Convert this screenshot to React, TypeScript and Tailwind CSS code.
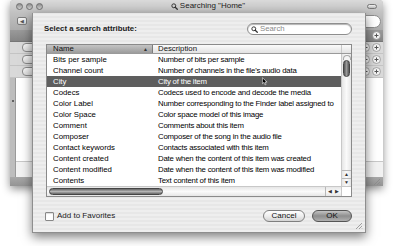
import React from 'react';

const rows: [string, string][] = [
  ["Bits per sample", "Number of bits per sample"],
  ["Channel count", "Number of channels in the file's audio data"],
  ["City", "City of the item"],
  ["Codecs", "Codecs used to encode and decode the media"],
  ["Color Label", "Number corresponding to the Finder label assigned to"],
  ["Color Space", "Color space model of this image"],
  ["Comment", "Comments about this item"],
  ["Composer", "Composer of the song in the audio file"],
  ["Contact keywords", "Contacts associated with this item"],
  ["Content created", "Date when the content of this item was created"],
  ["Content modified", "Date when the content of this item was modified"],
  ["Contents", "Text content of this item"],
];

function Magnifier({ className }: { className?: string }) {
  return (
    <svg viewBox="0 0 10 10" className={className}>
      <circle cx="4" cy="4" r="2.8" fill="none" stroke="#333" strokeWidth="1.4" />
      <path d="M6 6 L9 9" stroke="#333" strokeWidth="1.8" strokeLinecap="round" />
    </svg>
  );
}

function PlusMinus({ sign }: { sign: '+' | '-' }) {
  return (
    <svg viewBox="0 0 10 10" className="w-[9px] h-[9px]">
      <circle cx="5" cy="5" r="4.4" fill="#f4f4f4" stroke="#8a8a8a" strokeWidth="0.8" />
      <path d={sign === '+' ? "M2.8 5 H7.2 M5 2.8 V7.2" : "M2.8 5 H7.2"} stroke="#555" strokeWidth="1.1" />
    </svg>
  );
}

function Grip() {
  return (
    <svg viewBox="0 0 8 8" className="w-[8px] h-[8px]">
      <path d="M7 1 L1 7 M7 4 L4 7 M7 6.5 L6.5 7" stroke="#8c8c8c" strokeWidth="0.8" />
    </svg>
  );
}

function Cursor() {
  return (
    <svg viewBox="0 0 8 11" className="w-[6px] h-[9px]">
      <path d="M0.5 0.5 L0.5 8.5 L2.5 6.7 L4 10 L5.4 9.4 L4 6.2 L6.8 6.2 Z" fill="#000" stroke="#fff" strokeWidth="0.8" strokeLinejoin="round" />
    </svg>
  );
}

export default function App() {
  return (
    <div className="relative w-[396px] h-[246px] bg-white overflow-hidden font-['Liberation_Sans',Arial,sans-serif] text-[7.8px] text-black">
      {/* Background Finder window */}
      <div className="ml-[10px] w-[373px] h-[186px] flex flex-col rounded-t-[4px] overflow-hidden shadow-[0_3px_8px_rgba(0,0,0,0.45)] bg-[#bdbdbd]">
        {/* Title bar */}
        <div className="h-[12px] flex items-center px-[6px] bg-gradient-to-b from-[#dadada] to-[#c2c2c2]">
          <div className="flex gap-[3px]">
            <span className="w-[7px] h-[7px] rounded-full bg-gradient-to-b from-[#8f8f8f] to-[#d0d0d0] border border-[#6f6f6f]" />
            <span className="w-[7px] h-[7px] rounded-full bg-gradient-to-b from-[#8f8f8f] to-[#d0d0d0] border border-[#6f6f6f]" />
            <span className="w-[7px] h-[7px] rounded-full bg-gradient-to-b from-[#8f8f8f] to-[#d0d0d0] border border-[#6f6f6f]" />
          </div>
          <div className="flex-1 flex items-center justify-center gap-[2px] pl-[6px]">
            <Magnifier className="w-[7px] h-[7px]" />
            <span className="text-[8px] text-[#222]">Searching "Home"</span>
          </div>
          <span className="w-[10px] h-[5px] rounded-full border border-[#777] bg-gradient-to-b from-[#f0f0f0] to-[#bbb]" />
        </div>
        {/* Toolbar */}
        <div className="h-[18px] flex items-center pl-[7px] pr-[2px] bg-gradient-to-b from-[#c2c2c2] to-[#acacac]">
          <div className="w-[10px] h-[8px] rounded-[2px] border border-[#7c7c7c] bg-gradient-to-b from-[#f6f6f6] to-[#d6d6d6] flex items-center justify-center">
            <span className="text-[5px] text-[#555] leading-none">◀</span>
          </div>
          <div className="flex-1" />
          <div className="w-[80px] h-[13px] rounded-full bg-white border border-[#8c8c8c]" />
        </div>
        {/* Search bar band */}
        <div className="h-[12px] flex items-center justify-end pr-[2px] bg-gradient-to-b from-[#9a9a9a] to-[#858585] border-b border-[#777]">
          <PlusMinus sign="+" />
        </div>
        {/* Criteria rows */}
        <div className="flex flex-col bg-[#d9d9d9]">
          {[0, 1, 2].map((i) => (
            <div key={i} className="h-[12px] flex items-center pl-[12px] pr-[2px] border-b border-[#c4c4c4]">
              <span className="w-[40px] h-[9px] rounded-[4px] border border-[#8c8c8c] bg-gradient-to-b from-[#fafafa] to-[#dcdcdc]" />
              <div className="flex-1" />
              <div className="flex gap-[2px]">
                <PlusMinus sign="-" />
                <PlusMinus sign="+" />
              </div>
            </div>
          ))}
        </div>
        {/* Results */}
        <div className="flex-1 flex bg-white">
          <div className="w-[6px] bg-[#bdbdbd] border-r border-[#9a9a9a] flex flex-col items-center pt-[22px]">
            <span className="w-[2px] h-[2px] bg-[#444] rounded-full" />
          </div>
          <div className="flex-1 flex flex-col">
            <div className="flex-1" />
            <div className="h-[16px] border-t border-[#c8c8c8] bg-[#f2f2f2]" />
          </div>
        </div>
        {/* Footer */}
        <div className="h-[9px] flex items-center justify-end pr-[2px] bg-gradient-to-b from-[#a8a8a8] to-[#949494]">
          <Grip />
        </div>
      </div>

      {/* Sheet */}
      <div className="absolute left-[32px] top-[13px] w-[334px] h-[220px] flex flex-col px-[13px] pt-[10px] pb-[11px] border border-t-0 border-[#8e8e8e] shadow-[0_4px_10px_rgba(0,0,0,0.5)] bg-[repeating-linear-gradient(0deg,#eeeeee_0px,#eeeeee_2px,#e7e7e7_2px,#e7e7e7_4px)]">
        <div className="h-[12px] flex items-center justify-between">
          <span className="-ml-[2px] text-[7.8px] font-bold text-[#1a1a1a]">Select a search attribute:</span>
          <div className="w-[105px] h-[12px] rounded-full bg-white border border-[#8e8e8e] shadow-[inset_0_1px_1px_rgba(0,0,0,0.3)] flex items-center pl-[3px] gap-[2px]">
            <Magnifier className="w-[7px] h-[7px]" />
            <span className="text-[#8a8a8a]">Search</span>
          </div>
        </div>

        {/* Table */}
        <div className="mt-[9px] h-[153px] border border-[#8a8a8a] bg-white flex flex-col">
          {/* Header */}
          <div className="h-[9px] flex border-b border-[#9a9a9a]">
            <div className="w-[106px] flex items-center justify-between pl-[6px] pr-[4px] bg-gradient-to-b from-[#c4c4c4] to-[#9c9c9c] border-r border-[#7d7d7d]">
              <span className="text-[#111]">Name</span>
              <span className="text-[5px] text-[#333] leading-none">▲</span>
            </div>
            <div className="flex-1 flex items-center pl-[5px] bg-gradient-to-b from-[#fbfbfb] to-[#e2e2e2]">
              <span className="text-[#111]">Description</span>
            </div>
            <div className="w-[10px] bg-gradient-to-b from-[#fbfbfb] to-[#e2e2e2] border-l border-[#c8c8c8]" />
          </div>
          {/* Body */}
          <div className="flex-1 flex min-h-0">
            <div className="flex-1 flex flex-col min-w-0 overflow-hidden">
              {rows.map(([name, desc]) => {
                const sel = name === "City";
                return (
                  <div key={name} className={`relative h-[11px] shrink-0 flex items-center whitespace-nowrap ${sel ? 'bg-[#5e5e5e] text-white' : ''}`}>
                    <span className="w-[106px] shrink-0 pl-[6px]">{name}</span>
                    <span className="pl-[5px] tracking-[-0.2px]">{desc}</span>
                    {sel && (
                      <div className="absolute left-[215px] top-[1px]">
                        <Cursor />
                      </div>
                    )}
                  </div>
                );
              })}
            </div>
            {/* Vertical scroller */}
            <div className="w-[10px] flex flex-col items-center border-l border-[#c8c8c8] bg-gradient-to-r from-[#e6e6e6] via-[#fafafa] to-[#e6e6e6]">
              <div className="mt-[1px] w-[8px] h-[5px] rounded-t-full border border-b-0 border-[#a8a8a8] bg-[#f4f4f4]" />
              <div className="w-[7px] h-[17px] rounded-full bg-gradient-to-r from-[#555] via-[#999] to-[#555] border border-[#444]" />
              <div className="flex-1" />
              <div className="h-[8px] flex items-center justify-center border-t border-[#b8b8b8] w-full">
                <span className="text-[5px] leading-none text-[#333]">▲</span>
              </div>
              <div className="h-[8px] flex items-center justify-center border-t border-[#b8b8b8] w-full">
                <span className="text-[5px] leading-none text-[#333]">▼</span>
              </div>
            </div>
          </div>
          {/* Horizontal scroller */}
          <div className="h-[10px] flex border-t border-[#c8c8c8]">
            <div className="flex-1 flex items-center pl-[2px] bg-gradient-to-b from-[#e6e6e6] via-[#fafafa] to-[#e6e6e6]">
              <div className="w-[114px] h-[7px] rounded-full bg-gradient-to-b from-[#666] via-[#b4b4b4] to-[#666] border border-[#444]" />
              <div className="flex-1" />
              <div className="w-[16px] flex items-center justify-around border-l border-[#b8b8b8] h-full">
                <span className="text-[5px] leading-none text-[#333]">◀</span>
                <span className="text-[5px] leading-none text-[#333]">▶</span>
              </div>
            </div>
            <div className="w-[10px] bg-white border-l border-[#c8c8c8]" />
          </div>
        </div>

        {/* Footer */}
        <div className="mt-[13px] h-[12px] flex items-center">
          <span className="-ml-[1px] w-[9px] h-[9px] bg-white border border-[#888] rounded-[1px] shadow-[inset_0_1px_1px_rgba(0,0,0,0.15)]" />
          <span className="ml-[3px] text-[8px] text-[#1a1a1a]">Add to Favorites</span>
          <div className="flex-1" />
          <button className="w-[42px] h-[12px] rounded-full border border-[#7f7f7f] bg-gradient-to-b from-[#ffffff] via-[#eeeeee] to-[#d4d4d4] text-[8px] text-[#111] leading-none">Cancel</button>
          <button className="ml-[7px] w-[40px] h-[12px] rounded-full border border-[#555] bg-gradient-to-b from-[#c4c4c4] via-[#8e8e8e] to-[#b0b0b0] text-[8px] text-[#111] leading-none">OK</button>
        </div>
        <div className="absolute right-[2px] bottom-[2px]">
          <Grip />
        </div>
      </div>
    </div>
  );
}
